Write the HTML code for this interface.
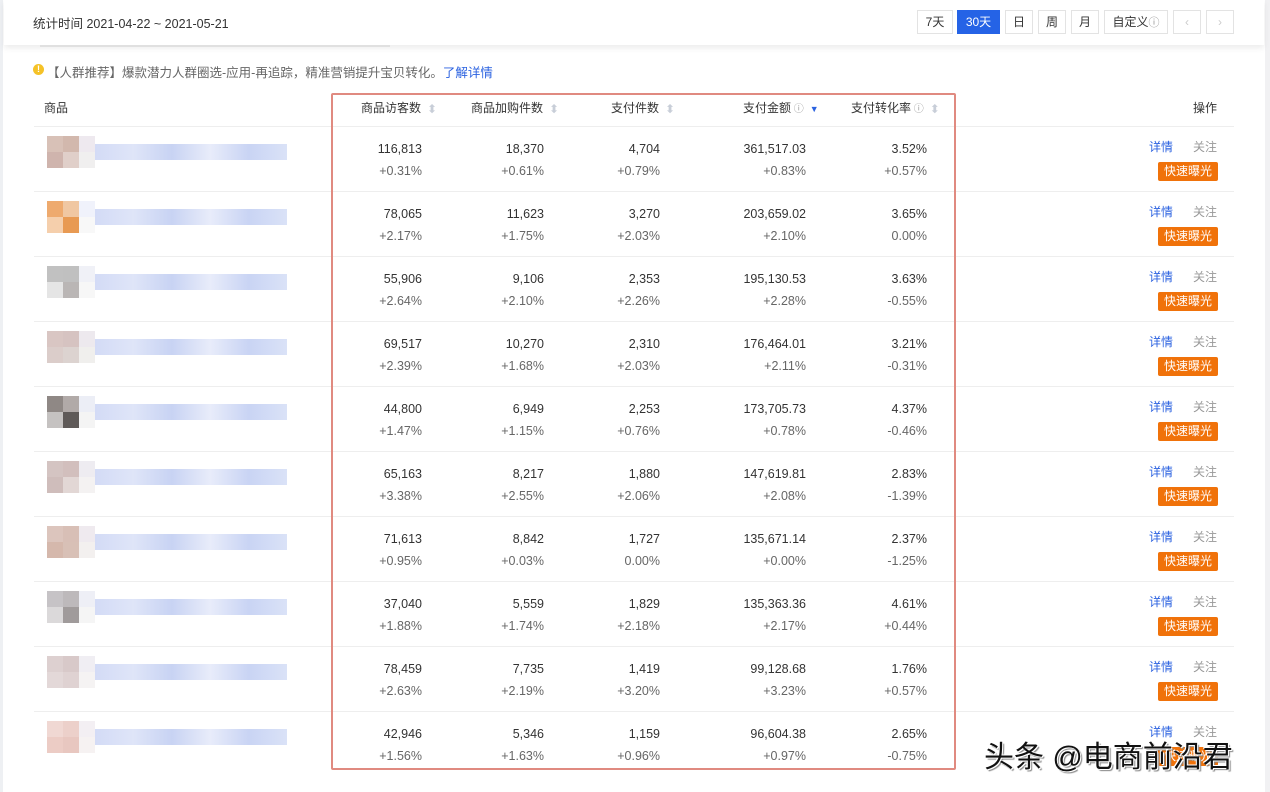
<!DOCTYPE html>
<html><head><meta charset="utf-8"><style>
body{margin:0;width:1270px;height:792px;background:#fff;position:relative;overflow:hidden;font-family:"Liberation Sans","Noto Sans CJK SC",sans-serif;font-size:12px;color:#333}
.a{position:absolute}
.topbar{left:4px;top:0;width:1260px;height:45px;background:#fff;box-shadow:0 3px 6px rgba(0,0,0,.08);z-index:2}
.btn{position:absolute;top:10px;height:24px;border:1px solid #e3e3e3;box-sizing:border-box;text-align:center;line-height:22px;font-size:12px;color:#333;background:#fff}
.row{position:absolute;left:34px;width:1200px;height:65px;border-top:1px solid #eee}
.n{position:absolute;text-align:right;font-size:12.5px;color:#333;width:120px}
.p{color:#666}
.img{position:absolute;left:13px;top:9px;width:48px;height:48px}
.img i{position:absolute;width:16px;height:16px}
.bar{position:absolute;left:61px;top:17px;width:192px;height:16px;background:linear-gradient(90deg,#d3dbf6,#dfe5f8,#c8d3f3,#e8ecfa,#c9d4f4,#dae2f7)}
.det{position:absolute;left:1115px;top:11px;color:#2b62e0;font-size:12px}
.gz{position:absolute;left:1159px;top:11px;color:#999;font-size:12px}
.ks{position:absolute;left:1124px;top:35px;width:60px;height:19px;background:#f0720a;color:#fff;border-radius:2px;text-align:center;line-height:19px;font-size:12px}
.h{position:absolute;top:99px;font-size:12px;color:#333}
.arr{display:inline-block;width:6px;margin-left:6px;vertical-align:middle;line-height:0}
</style></head><body>
<div class="a" style="left:0;top:0;width:3px;height:792px;background:#eef0f3"></div>
<div class="a" style="left:1265px;top:0;width:5px;height:792px;background:#f1f1f3"></div>
<div class="a topbar">
<div class="a" style="left:29px;top:13px;font-size:12.5px">统计时间 2021-04-22 ~ 2021-05-21</div>
<div class="btn" style="left:913px;width:36px">7天</div>
<div class="btn" style="left:953px;width:43px;background:#2563e6;border-color:#2563e6;color:#fff">30天</div>
<div class="btn" style="left:1001px;width:28px">日</div>
<div class="btn" style="left:1034px;width:28px">周</div>
<div class="btn" style="left:1067px;width:28px">月</div>
<div class="btn" style="left:1100px;width:64px">自定义<span style="color:#999;font-size:11px">ⓘ</span></div>
<div class="btn" style="left:1169px;width:28px;color:#ccc">‹</div>
<div class="btn" style="left:1202px;width:28px;color:#ccc">›</div>
</div>
<div class="a" style="left:40px;top:45px;width:350px;height:2px;background:#eee"></div>
<div class="a" style="left:33px;top:64px;width:11px;height:11px;border-radius:50%;background:#f5c227;color:#fff;font-size:9px;text-align:center;line-height:11px;font-weight:bold">!</div>
<div class="a" style="left:47px;top:62px;color:#666;font-size:12.5px">【人群推荐】爆款潜力人群圈选-应用-再追踪，精准营销提升宝贝转化。<span style="color:#2b62e0">了解详情</span></div>
<div class="h" style="left:44px">商品</div>
<div class="h" style="left:361px">商品访客数<span class="arr" style="color:#c8ced8">⬍</span></div>
<div class="h" style="left:471px">商品加购件数<span class="arr" style="color:#c8ced8">⬍</span></div>
<div class="h" style="left:611px">支付件数<span class="arr" style="color:#c8ced8">⬍</span></div>
<div class="h" style="left:743px">支付金额<span style="color:#999;font-size:10px"> ⓘ</span><span class="arr" style="color:#2b62e0;font-size:9px">▼</span></div>
<div class="h" style="left:851px">支付转化率<span style="color:#999;font-size:10px"> ⓘ</span><span class="arr" style="color:#c8ced8">⬍</span></div>
<div class="h" style="left:1193px">操作</div>

<div class="row" style="top:126px"><div class="img"><i style="left:0;top:0;background:#d8c1b7"></i><i style="left:16px;top:0;background:#d2b8ad"></i><i style="left:32px;top:0;background:#eee9ef"></i><i style="left:0;top:16px;background:#cfb4ad"></i><i style="left:16px;top:16px;background:#e0cfc9"></i><i style="left:32px;top:16px;background:#f0efef"></i></div><div class="bar"></div>
<div class="n" style="left:268px;top:15px">116,813</div><div class="n p" style="left:268px;top:37px">+0.31%</div><div class="n" style="left:390px;top:15px">18,370</div><div class="n p" style="left:390px;top:37px">+0.61%</div><div class="n" style="left:506px;top:15px">4,704</div><div class="n p" style="left:506px;top:37px">+0.79%</div><div class="n" style="left:652px;top:15px">361,517.03</div><div class="n p" style="left:652px;top:37px">+0.83%</div><div class="n" style="left:773px;top:15px">3.52%</div><div class="n p" style="left:773px;top:37px">+0.57%</div>
<div class="det">详情</div><div class="gz">关注</div><div class="ks">快速曝光</div></div>

<div class="row" style="top:191px"><div class="img"><i style="left:0;top:0;background:#eeaa6e"></i><i style="left:16px;top:0;background:#f0c7a2"></i><i style="left:32px;top:0;background:#f0f2fb"></i><i style="left:0;top:16px;background:#f5cfac"></i><i style="left:16px;top:16px;background:#e89a53"></i><i style="left:32px;top:16px;background:#f8f8f8"></i></div><div class="bar"></div>
<div class="n" style="left:268px;top:15px">78,065</div><div class="n p" style="left:268px;top:37px">+2.17%</div><div class="n" style="left:390px;top:15px">11,623</div><div class="n p" style="left:390px;top:37px">+1.75%</div><div class="n" style="left:506px;top:15px">3,270</div><div class="n p" style="left:506px;top:37px">+2.03%</div><div class="n" style="left:652px;top:15px">203,659.02</div><div class="n p" style="left:652px;top:37px">+2.10%</div><div class="n" style="left:773px;top:15px">3.65%</div><div class="n p" style="left:773px;top:37px">0.00%</div>
<div class="det">详情</div><div class="gz">关注</div><div class="ks">快速曝光</div></div>

<div class="row" style="top:256px"><div class="img"><i style="left:0;top:0;background:#c1c1c1"></i><i style="left:16px;top:0;background:#c0c0c0"></i><i style="left:32px;top:0;background:#f0f1f7"></i><i style="left:0;top:16px;background:#e5e5e5"></i><i style="left:16px;top:16px;background:#bab6b5"></i><i style="left:32px;top:16px;background:#f7f7f7"></i></div><div class="bar"></div>
<div class="n" style="left:268px;top:15px">55,906</div><div class="n p" style="left:268px;top:37px">+2.64%</div><div class="n" style="left:390px;top:15px">9,106</div><div class="n p" style="left:390px;top:37px">+2.10%</div><div class="n" style="left:506px;top:15px">2,353</div><div class="n p" style="left:506px;top:37px">+2.26%</div><div class="n" style="left:652px;top:15px">195,130.53</div><div class="n p" style="left:652px;top:37px">+2.28%</div><div class="n" style="left:773px;top:15px">3.63%</div><div class="n p" style="left:773px;top:37px">-0.55%</div>
<div class="det">详情</div><div class="gz">关注</div><div class="ks">快速曝光</div></div>

<div class="row" style="top:321px"><div class="img"><i style="left:0;top:0;background:#d9c6c3"></i><i style="left:16px;top:0;background:#d6c3c1"></i><i style="left:32px;top:0;background:#ede9ee"></i><i style="left:0;top:16px;background:#dbcdca"></i><i style="left:16px;top:16px;background:#dcd3d0"></i><i style="left:32px;top:16px;background:#f0efed"></i></div><div class="bar"></div>
<div class="n" style="left:268px;top:15px">69,517</div><div class="n p" style="left:268px;top:37px">+2.39%</div><div class="n" style="left:390px;top:15px">10,270</div><div class="n p" style="left:390px;top:37px">+1.68%</div><div class="n" style="left:506px;top:15px">2,310</div><div class="n p" style="left:506px;top:37px">+2.03%</div><div class="n" style="left:652px;top:15px">176,464.01</div><div class="n p" style="left:652px;top:37px">+2.11%</div><div class="n" style="left:773px;top:15px">3.21%</div><div class="n p" style="left:773px;top:37px">-0.31%</div>
<div class="det">详情</div><div class="gz">关注</div><div class="ks">快速曝光</div></div>

<div class="row" style="top:386px"><div class="img"><i style="left:0;top:0;background:#8f8885"></i><i style="left:16px;top:0;background:#b1aaa8"></i><i style="left:32px;top:0;background:#eceef6"></i><i style="left:0;top:16px;background:#c5c2c1"></i><i style="left:16px;top:16px;background:#5f5a58"></i><i style="left:32px;top:16px;background:#f4f4f4"></i></div><div class="bar"></div>
<div class="n" style="left:268px;top:15px">44,800</div><div class="n p" style="left:268px;top:37px">+1.47%</div><div class="n" style="left:390px;top:15px">6,949</div><div class="n p" style="left:390px;top:37px">+1.15%</div><div class="n" style="left:506px;top:15px">2,253</div><div class="n p" style="left:506px;top:37px">+0.76%</div><div class="n" style="left:652px;top:15px">173,705.73</div><div class="n p" style="left:652px;top:37px">+0.78%</div><div class="n" style="left:773px;top:15px">4.37%</div><div class="n p" style="left:773px;top:37px">-0.46%</div>
<div class="det">详情</div><div class="gz">关注</div><div class="ks">快速曝光</div></div>

<div class="row" style="top:451px"><div class="img"><i style="left:0;top:0;background:#d4c4c2"></i><i style="left:16px;top:0;background:#d2bfbd"></i><i style="left:32px;top:0;background:#eeecf1"></i><i style="left:0;top:16px;background:#cfbdbb"></i><i style="left:16px;top:16px;background:#e2d7d5"></i><i style="left:32px;top:16px;background:#f4f2f2"></i></div><div class="bar"></div>
<div class="n" style="left:268px;top:15px">65,163</div><div class="n p" style="left:268px;top:37px">+3.38%</div><div class="n" style="left:390px;top:15px">8,217</div><div class="n p" style="left:390px;top:37px">+2.55%</div><div class="n" style="left:506px;top:15px">1,880</div><div class="n p" style="left:506px;top:37px">+2.06%</div><div class="n" style="left:652px;top:15px">147,619.81</div><div class="n p" style="left:652px;top:37px">+2.08%</div><div class="n" style="left:773px;top:15px">2.83%</div><div class="n p" style="left:773px;top:37px">-1.39%</div>
<div class="det">详情</div><div class="gz">关注</div><div class="ks">快速曝光</div></div>

<div class="row" style="top:516px"><div class="img"><i style="left:0;top:0;background:#dcc5bd"></i><i style="left:16px;top:0;background:#d8bfb6"></i><i style="left:32px;top:0;background:#efeaef"></i><i style="left:0;top:16px;background:#d5b8ac"></i><i style="left:16px;top:16px;background:#d8c0b6"></i><i style="left:32px;top:16px;background:#f3f0ef"></i></div><div class="bar"></div>
<div class="n" style="left:268px;top:15px">71,613</div><div class="n p" style="left:268px;top:37px">+0.95%</div><div class="n" style="left:390px;top:15px">8,842</div><div class="n p" style="left:390px;top:37px">+0.03%</div><div class="n" style="left:506px;top:15px">1,727</div><div class="n p" style="left:506px;top:37px">0.00%</div><div class="n" style="left:652px;top:15px">135,671.14</div><div class="n p" style="left:652px;top:37px">+0.00%</div><div class="n" style="left:773px;top:15px">2.37%</div><div class="n p" style="left:773px;top:37px">-1.25%</div>
<div class="det">详情</div><div class="gz">关注</div><div class="ks">快速曝光</div></div>

<div class="row" style="top:581px"><div class="img"><i style="left:0;top:0;background:#c6c3c6"></i><i style="left:16px;top:0;background:#bdb9bb"></i><i style="left:32px;top:0;background:#eeeff6"></i><i style="left:0;top:16px;background:#dbd9da"></i><i style="left:16px;top:16px;background:#a09b9b"></i><i style="left:32px;top:16px;background:#f5f5f5"></i></div><div class="bar"></div>
<div class="n" style="left:268px;top:15px">37,040</div><div class="n p" style="left:268px;top:37px">+1.88%</div><div class="n" style="left:390px;top:15px">5,559</div><div class="n p" style="left:390px;top:37px">+1.74%</div><div class="n" style="left:506px;top:15px">1,829</div><div class="n p" style="left:506px;top:37px">+2.18%</div><div class="n" style="left:652px;top:15px">135,363.36</div><div class="n p" style="left:652px;top:37px">+2.17%</div><div class="n" style="left:773px;top:15px">4.61%</div><div class="n p" style="left:773px;top:37px">+0.44%</div>
<div class="det">详情</div><div class="gz">关注</div><div class="ks">快速曝光</div></div>

<div class="row" style="top:646px"><div class="img"><i style="left:0;top:0;background:#ddd0d0"></i><i style="left:16px;top:0;background:#d8c9c9"></i><i style="left:32px;top:0;background:#f0eef3"></i><i style="left:0;top:16px;background:#e3d8d8"></i><i style="left:16px;top:16px;background:#dfd2d2"></i><i style="left:32px;top:16px;background:#f5f3f3"></i></div><div class="bar"></div>
<div class="n" style="left:268px;top:15px">78,459</div><div class="n p" style="left:268px;top:37px">+2.63%</div><div class="n" style="left:390px;top:15px">7,735</div><div class="n p" style="left:390px;top:37px">+2.19%</div><div class="n" style="left:506px;top:15px">1,419</div><div class="n p" style="left:506px;top:37px">+3.20%</div><div class="n" style="left:652px;top:15px">99,128.68</div><div class="n p" style="left:652px;top:37px">+3.23%</div><div class="n" style="left:773px;top:15px">1.76%</div><div class="n p" style="left:773px;top:37px">+0.57%</div>
<div class="det">详情</div><div class="gz">关注</div><div class="ks">快速曝光</div></div>

<div class="row" style="top:711px"><div class="img"><i style="left:0;top:0;background:#f0d8d3"></i><i style="left:16px;top:0;background:#ecd0ca"></i><i style="left:32px;top:0;background:#f3eff3"></i><i style="left:0;top:16px;background:#ecccc5"></i><i style="left:16px;top:16px;background:#e8c7c0"></i><i style="left:32px;top:16px;background:#f6f2f2"></i></div><div class="bar"></div>
<div class="n" style="left:268px;top:15px">42,946</div><div class="n p" style="left:268px;top:37px">+1.56%</div><div class="n" style="left:390px;top:15px">5,346</div><div class="n p" style="left:390px;top:37px">+1.63%</div><div class="n" style="left:506px;top:15px">1,159</div><div class="n p" style="left:506px;top:37px">+0.96%</div><div class="n" style="left:652px;top:15px">96,604.38</div><div class="n p" style="left:652px;top:37px">+0.97%</div><div class="n" style="left:773px;top:15px">2.65%</div><div class="n p" style="left:773px;top:37px">-0.75%</div>
<div class="det">详情</div><div class="gz">关注</div><div class="ks">快速曝光</div></div>

<div class="a" style="left:331px;top:93px;width:621px;height:673px;border:2px solid #e08a80;border-radius:2px"></div>
<div class="a" style="left:984px;top:732px;font-size:30px;color:#111;text-shadow:1px 1px 0 #fff,-1px -1px 0 #fff,2px 2px 1px #888;white-space:nowrap">头条 @电商前沿君</div>
</body></html>
